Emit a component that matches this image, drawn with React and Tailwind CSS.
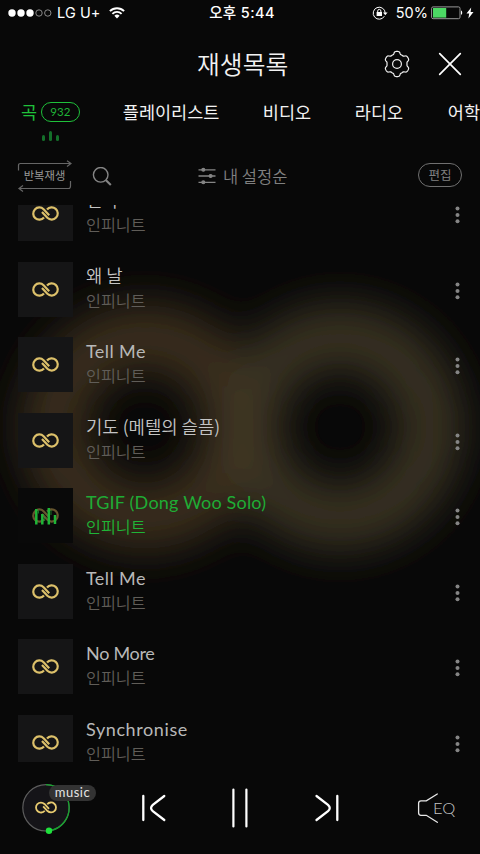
import { clsx } from 'clsx';

const songs = [
  { title: '천사', artist: '인피니트', offset: 'relative -top-[0.5px]' },
  { title: '왜 날', artist: '인피니트' },
  { title: 'Tell Me', artist: '인피니트', tracking: 'tracking-[0.4px]' },
  { title: '기도 (메텔의 슬픔)', artist: '인피니트' },
  { title: 'TGIF (Dong Woo Solo)', artist: '인피니트', tracking: 'tracking-[0.2px]', playing: true },
  { title: 'Tell Me', artist: '인피니트', tracking: 'tracking-[0.4px]' },
  { title: 'No More', artist: '인피니트', tracking: 'tracking-[-0.3px]' },
  { title: 'Synchronise', artist: '인피니트', tracking: 'tracking-[0.6px]' },
];

const gearPath =
  Array.from({ length: 120 }, (_, i) => {
    const a = (i / 120) * Math.PI * 2;
    const r = 11.3 + 1.35 * Math.tanh(2.2 * Math.cos(6 * a));
    return `${i ? 'L' : 'M'}${(14 + r * Math.sin(a)).toFixed(2)} ${(14 - r * Math.cos(a)).toFixed(2)}`;
  }).join('') + 'Z';

const InfinityLogo = ({ className }) => (
  <svg className={className} viewBox="0 0 27 15" fill="none" stroke="currentColor" strokeWidth="2.2">
    <path d="M12 11.5A6.1 6.1 0 1 1 11.6 3.2L17.2 9.2" />
    <path d="M15 3.5A6.1 6.1 0 1 1 15.4 11.8L10 6" />
  </svg>
);

const Backdrop = () => (
  <svg className="absolute inset-0 h-[854px] w-[480px]" viewBox="0 0 480 854" fill="none">
    <defs>
      <filter id="soft" filterUnits="userSpaceOnUse" x="-60" y="180" width="600" height="500">
        <feGaussianBlur stdDeviation="22" />
      </filter>
    </defs>
    <g filter="url(#soft)" strokeWidth="64">
      <circle cx="145" cy="427" r="91" stroke="#3b2f1e" />
      <circle cx="340" cy="427" r="91" stroke="#383220" />
      <path d="M242 385V475" stroke="#423825" strokeWidth="40" />
    </g>
  </svg>
);

const StatusBar = () => (
  <div className="grid h-[26px] grid-cols-[200px_84px_1fr] items-center text-white font-['Inter','Noto_Sans_CJK_KR',sans-serif]">
    <div className="flex items-center pl-2">
      <svg className="h-2 w-11" viewBox="0 0 44 8" fill="none">
        <circle cx="4" cy="4" r="3.7" fill="#fff" />
        <circle cx="13" cy="4" r="3.7" fill="#fff" />
        <circle cx="22" cy="4" r="3.7" fill="#fff" />
        <circle cx="31" cy="4" r="3.2" stroke="#aaa" strokeWidth=".8" />
        <circle cx="39.8" cy="4" r="3.2" stroke="#aaa" strokeWidth=".8" />
      </svg>
      <span className="ml-[5px] w-[52px] whitespace-nowrap text-[14.5px] tracking-[0.1px]">LG U+</span>
      <svg className="h-3 w-4" viewBox="0 0 16 12" fill="none" stroke="#fff" strokeWidth="1.9">
        <path d="M.9 4.2a10 10 0 0 1 14.2 0M3.4 6.8a6.5 6.5 0 0 1 9.2 0" />
        <path d="M8 11.4 5.4 8.8a3.7 3.7 0 0 1 5.2 0Z" fill="#fff" stroke="none" />
      </svg>
    </div>
    <div className="whitespace-nowrap text-center text-[14.5px] font-medium tracking-[0.4px]">오후 5:44</div>
    <div className="flex items-center justify-end pr-1.5">
      <svg className="mr-2 h-4 w-4" viewBox="0 0 16 16" fill="none" stroke="#fff">
        <path d="M12.4 11.2A6 6 0 1 1 13.2 8" />
        <path d="M11 7.6h4.6l-2.3 2.6Z" fill="#fff" stroke="none" />
        <rect x="4.6" y="7" width="5.4" height="4" fill="#fff" stroke="none" />
        <path d="M5.7 7.2V6a1.6 1.6 0 0 1 3.2 0v1.2" />
      </svg>
      <span className="mr-[3px] text-[14.5px]">50%</span>
      <svg className="h-[14px] w-8" viewBox="0 0 32 14" fill="none">
        <rect x=".6" y=".9" width="28.4" height="11.8" rx="1.5" stroke="#999" />
        <rect x="2" y="2" width="13.2" height="9.6" fill="#4cd964" />
        <path d="M30 4.6c1.6.6 1.6 3.8 0 4.4Z" fill="#fff" />
      </svg>
      <svg className="ml-[3px] h-3 w-2" viewBox="0 0 8 12" fill="#fff">
        <path d="M5.2.5.5 6.6h2.7L2.4 11.5 7.5 5H4.6Z" />
      </svg>
    </div>
  </div>
);

const Header = () => (
  <div className="grid h-[74px] grid-cols-[1fr_90px_1fr] items-center">
    <div />
    <h1 className="ml-[2px] whitespace-nowrap text-[24.8px] leading-none font-[350] text-[#f2f2f2]">재생목록</h1>
    <div className="flex items-center justify-end pr-[18px]">
      <svg className="mt-0.5 h-7 w-7" viewBox="0 0 28 28" fill="none" stroke="#f0f0f0" strokeWidth="1.2">
        <path d={gearPath} />
        <circle cx="14" cy="14" r="4.4" />
      </svg>
      <svg className="ml-[27px] mt-0.5 h-6 w-6" viewBox="0 0 24 24" fill="none" stroke="#fff" strokeWidth="1.7" strokeLinecap="round">
        <path d="M1.7 1.7 22.3 22.3M22.3 1.7 1.7 22.3" />
      </svg>
    </div>
  </div>
);

const Tabs = () => (
  <div className="h-[54px] overflow-hidden">
    <div className="flex h-6 items-center pl-[21px] text-[17.5px] leading-none whitespace-nowrap text-[#f2f2f2]">
      <span className="w-[17px] text-[#1fc13a]">곡</span>
      <span className="ml-[3px] flex h-5 w-[39px] items-center justify-center rounded-full border-[1.5px] border-[#1fc13a] text-[11.5px] text-[#1fb537] font-['Lato',sans-serif]">932</span>
      <span className="ml-[43px] w-[98px] shrink-0">플레이리스트</span>
      <span className="ml-[42px] w-[49px] shrink-0">비디오</span>
      <span className="ml-[43px] w-[49px] shrink-0">라디오</span>
      <span className="ml-11 shrink-0">어학</span>
    </div>
    <div className="mt-[7px] ml-[42px] flex h-[10px] items-end gap-1">
      <i className="h-[6px] w-[3px] rounded-full bg-[#14702a]" />
      <i className="h-[10px] w-[3px] rounded-full bg-[#14702a]" />
      <i className="h-[6px] w-[3px] rounded-full bg-[#14702a]" />
    </div>
  </div>
);

const Toolbar = () => (
  <div className="flex h-[51px] items-start text-[#808080]">
    <div className="relative ml-[17px] mt-[6px] flex h-8 w-[55px] items-center justify-center">
      <svg className="absolute inset-0 h-8 w-[55px]" viewBox="0 0 55 32" fill="none" stroke="#666" strokeWidth="1.2">
        <path d="M1.5 10.5V5.5Q1.5 3.5 3.5 3.5H54M50 .7 54 3.5 50 6.4M53.5 21V26Q53.5 28.5 51.5 28.5H2M6 25.6 2 28.5 6 31.4" />
      </svg>
      <span className="mt-[-1px] text-[11.3px] leading-none text-[#999] whitespace-nowrap">반복재생</span>
    </div>
    <svg className="ml-5 mt-[13px] h-5 w-5" viewBox="0 0 20 20" fill="none" stroke="#858585" strokeWidth="1.4">
      <circle cx="8.7" cy="7.8" r="7.3" />
      <path d="m14 13.2 4.8 4.8" strokeWidth="2.1" />
    </svg>
    <div className="ml-[86px] mt-3 flex h-5 items-center">
      <svg className="h-[18px] w-[18px]" viewBox="0 0 18 18" fill="#858585" stroke="#858585" strokeWidth="1.3">
        <path d="M.5 2.8h17M.5 9h17M.5 15.3h17" />
        <circle cx="5.3" cy="2.8" r="1.4" />
        <circle cx="12.6" cy="9" r="1.4" />
        <circle cx="5.3" cy="15.3" r="1.4" />
      </svg>
      <span className="ml-[7px] whitespace-nowrap text-[16.5px] leading-none font-[350]">내 설정순</span>
    </div>
    <div className="ml-auto mr-[18px] mt-[9px] flex h-6 w-11 items-center justify-center rounded-full border-[1.2px] border-[#707070] text-[12.5px] leading-none">
      편집
    </div>
  </div>
);

const Cover = ({ playing }) => (
  <div className={clsx('relative flex h-[55px] w-[55px] items-center justify-center', playing ? 'bg-[#090909]' : 'bg-[#151516]')}>
    <InfinityLogo className={clsx('h-[15px] w-[27px]', playing ? 'text-[#66552e]' : 'text-[#dcc06a]')} />
    {playing && (
      <svg className="absolute left-[15px] top-[18px] h-5 w-6" viewBox="0 0 24 20" stroke="#1fb537" strokeWidth="2.5">
        <path d="M3.3 3v15.5M9.3 8v10.5M15.8 2v16.5M22 9v9" />
        <path d="M5.5 4.5v3M11.7 11v4M18 4v5" strokeWidth="1" opacity=".6" />
      </svg>
    )}
  </div>
);

const SongRow = ({ song }) => (
  <li className="flex h-[75.5px] shrink-0 pl-[18px]">
    <Cover playing={song.playing} />
    <div className="ml-[13px] flex-1 whitespace-nowrap">
      <p
        className={clsx(
          'h-[26px]',
          song.tracking
            ? "text-[18px] leading-[28px] font-['Lato','Noto_Sans_CJK_KR',sans-serif]"
            : 'text-[17.8px] leading-[26px] font-[350]',
          song.tracking,
          song.offset,
          song.playing ? 'text-[#1fac35]' : song.tracking ? 'text-[#b8b8b8]' : 'text-[#c4c4c4]'
        )}
      >
        {song.title}
      </p>
      <p className={clsx('h-6 text-[16.2px] leading-6 font-[350]', song.playing ? 'text-[#1fb537]' : 'text-[#605d58]')}>
        {song.artist}
      </p>
    </div>
    <svg className="mr-5 mt-5 h-[18px] w-[5px]" viewBox="0 0 5 18" fill="#858585">
      <circle cx="2.5" cy="2.4" r="2" />
      <circle cx="2.5" cy="8.9" r="2" />
      <circle cx="2.5" cy="15.3" r="2" />
    </svg>
  </li>
);

const Player = () => (
  <div className="relative flex h-[92px] items-start bg-[#080808] pt-[22px]">
    <div className="relative ml-[22px] h-12 w-12">
      <svg className="absolute inset-0 h-12 w-12 overflow-visible" viewBox="0 0 48 48" fill="#151418">
        <circle cx="24" cy="23.8" r="23.2" stroke="#5d5d5d" strokeWidth="1.2" />
        <path d="M24 .6A23.2 23.2 0 0 1 27 46.8" fill="none" stroke="#17a52f" strokeWidth="1.3" />
        <circle cx="27" cy="46.8" r="3.2" fill="#1fe03c" />
      </svg>
      <InfinityLogo className="absolute left-[13px] top-[17px] h-[13px] w-[22px] text-[#e8cb70]" />
      <span className="absolute left-[27px] top-px flex h-[15.5px] w-[47px] items-center justify-center rounded-full bg-[#333] pb-px text-[13px] leading-none text-[#e4e4e4] tracking-[0.5px] font-['Lato',sans-serif]">music</span>
    </div>
    <svg className="ml-[71px] mt-[10px] h-7 w-[26px]" viewBox="0 0 26 28" fill="none" stroke="#fff" strokeWidth="2.3" strokeLinecap="round">
      <path d="M2.3 2v24M23.3 2 11.8 10.8Q8.3 14 11.8 17.2L23.3 26" />
    </svg>
    <svg className="ml-[63px] mt-1 h-10 w-5" viewBox="0 0 20 40" stroke="#fff" strokeWidth="2.2" strokeLinecap="round">
      <path d="M3.4 1.5v37M16.4 1.5v37" />
    </svg>
    <svg className="ml-16 mt-[10px] h-7 w-[26px]" viewBox="0 0 26 28" fill="none" stroke="#fff" strokeWidth="2.3" strokeLinecap="round">
      <path d="M23.3 2v24M2.5 2 14 10.8Q17.5 14 14 17.2L2.5 26" />
    </svg>
    <div className="ml-[77px] mt-2 flex items-center">
      <svg className="h-8 w-[21px]" viewBox="0 0 21 32" fill="none" stroke="#e8e8e8" strokeWidth="1.3" strokeLinecap="round">
        <path d="M20.3 2 9.3 8.8H4Q1.6 8.8 1.6 11.2V20.8Q1.6 23.3 4 23.3H9.3L20.3 30.3" />
      </svg>
      <span className="-ml-[5px] text-[16.5px] leading-none font-light text-[#c4c4c4] font-['Lato',sans-serif]">EQ</span>
    </div>
  </div>
);

export default function App() {
  return (
    <div className="relative flex h-[854px] w-[480px] flex-col overflow-hidden bg-[#080808] font-['Noto_Sans_CJK_KR',sans-serif]">
      <Backdrop />
      <div className="relative">
        <StatusBar />
        <Header />
        <Tabs />
        <Toolbar />
      </div>
      <div className="relative h-[557px] overflow-hidden">
        <ul className="-mt-[19px] flex flex-col">
          {songs.map((song, i) => (
            <SongRow key={i} song={song} />
          ))}
        </ul>
      </div>
      <Player />
    </div>
  );
}
